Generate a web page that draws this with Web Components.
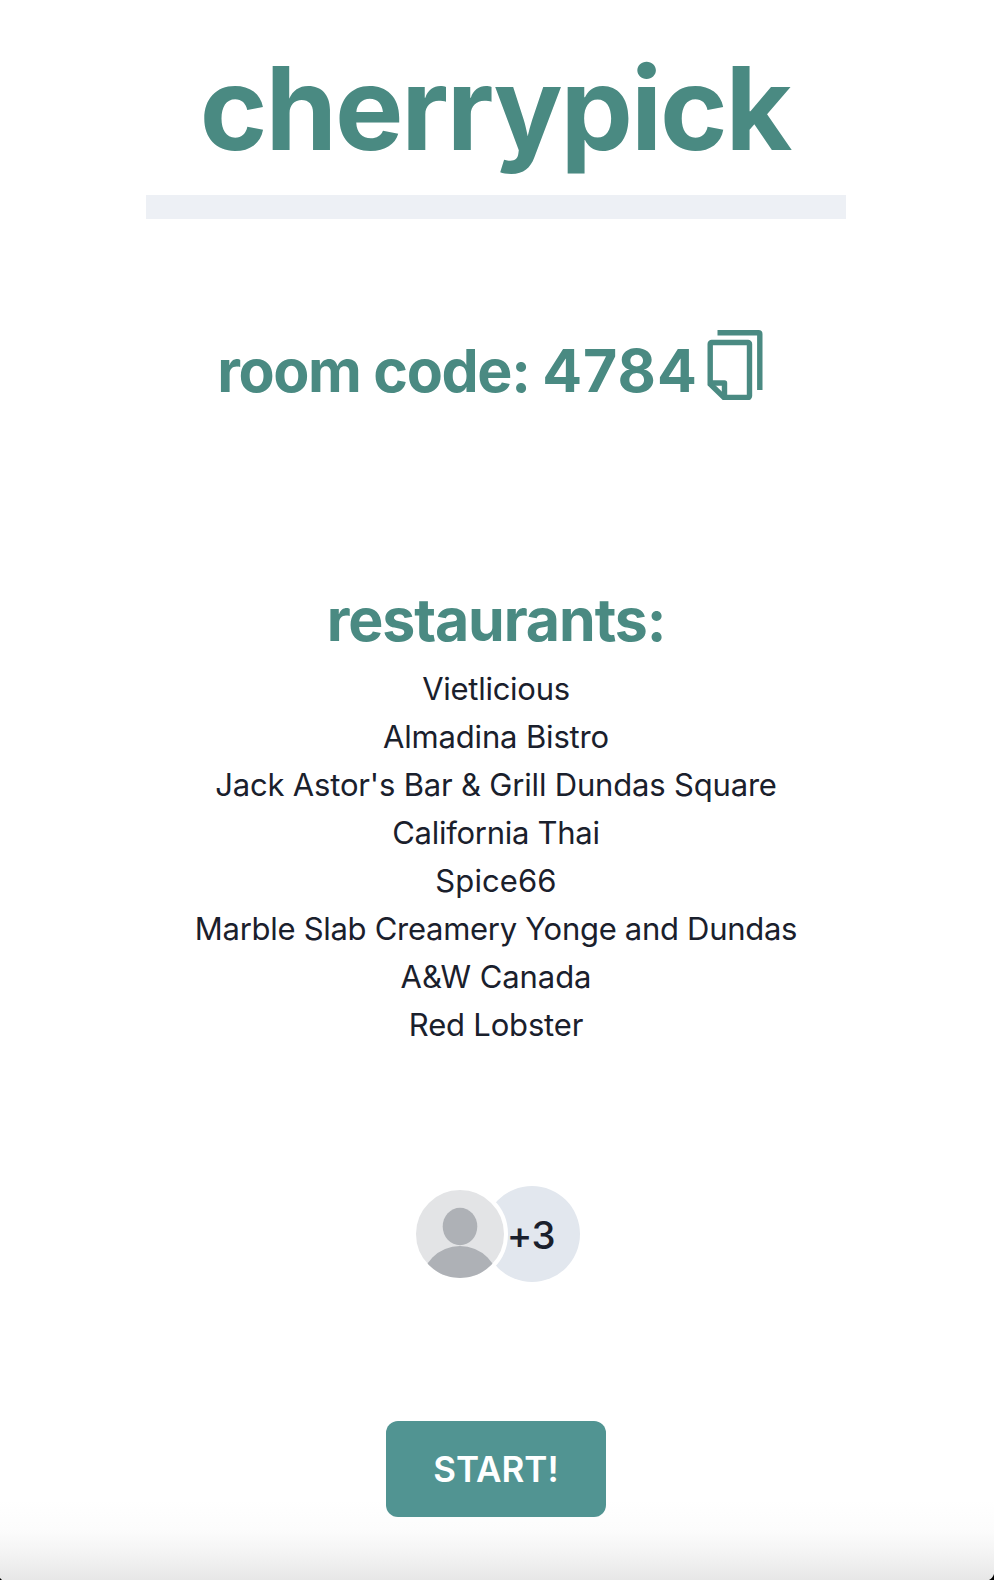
<!DOCTYPE html>
<html lang="en">
<head>
  <meta charset="UTF-8">
  <title>cherrypick</title>
  <style>
    body {
      margin: 0;
      background: #fff;
    }
  </style>
</head>
<body>
  <room-page>
    <room-title slot="title">cherrypick</room-title>
    <room-code slot="code">room code: <span style="letter-spacing: 1px">4784</span></room-code>
    <restaurant-list slot="list">
      <span slot="heading">restaurants:</span>
      <restaurant-item style="letter-spacing: -0.28px">Vietlicious</restaurant-item>
      <restaurant-item style="letter-spacing: -0.16px">Almadina Bistro</restaurant-item>
      <restaurant-item style="letter-spacing: -0.18px">Jack Astor's Bar &amp; Grill Dundas Square</restaurant-item>
      <restaurant-item style="letter-spacing: -0.27px">California Thai</restaurant-item>
      <restaurant-item style="letter-spacing: 0.1px">Spice66</restaurant-item>
      <restaurant-item style="letter-spacing: -0.29px">Marble Slab Creamery Yonge and Dundas</restaurant-item>
      <restaurant-item style="letter-spacing: -0.08px">A&amp;W Canada</restaurant-item>
      <restaurant-item style="letter-spacing: -0.18px">Red Lobster</restaurant-item>
    </restaurant-list>
    <avatar-group slot="people">+3</avatar-group>
    <start-button slot="action">START!</start-button>
  </room-page>

  <script>
    // small helper so each component only has to give its markup
    function define(name, html) {
      customElements.define(name, class extends HTMLElement {
        constructor() {
          super();
          this.attachShadow({ mode: 'open' });
          this.shadowRoot.innerHTML = html;
        }
      });
    }

    define('room-page', `
      <style>
        :host {
          --brand: #4a8a82;
          position: relative;
          display: flex;
          flex-direction: column;
          align-items: center;
          box-sizing: border-box;
          height: 1580px;
          padding: 37px 2px 0 0;
          overflow: hidden;
          color: #1a202c;
          font-family: Inter, "Liberation Sans", sans-serif;
          background: linear-gradient(#fff 1500px, #fcfcfc 1530px, #f5f5f5 1550px, #e7e7e7 1580px);
        }
        .corner {
          position: absolute;
          bottom: 0;
        }
        .left { left: 0; }
        .right { right: 0; }
      </style>
      <slot name="title"></slot>
      <slot name="code"></slot>
      <slot name="list"></slot>
      <slot name="people"></slot>
      <slot name="action"></slot>
      <svg class="corner left" width="2" height="2"><path d="M0 0L2 2H0z"/></svg>
      <svg class="corner right" width="5" height="6"><path d="M5 0V6H0Q3.500 4.500 5 0z"/></svg>
    `);

    define('room-title', `
      <style>
        :host {
          display: flex;
          flex-direction: column;
          align-items: center;
          width: 700px;
          color: var(--brand);
        }
        h1 {
          margin: 0 2px 14px 0;
          font-size: 115px;
          font-weight: 700;
          line-height: 144px;
          letter-spacing: -2.1px;
        }
        .bar {
          width: 100%;
          height: 24px;
          background: #edf0f5;
        }
      </style>
      <h1><slot></slot></h1>
      <div class="bar"></div>
    `);

    define('room-code', `
      <style>
        :host {
          display: flex;
          align-items: flex-start;
          gap: 2px;
          margin-top: 111px;
          padding-right: 5px;
          color: var(--brand);
        }
        h2 {
          margin: 0;
          padding-top: 4px;
          font-size: 59px;
          font-weight: 700;
          line-height: 73px;
          letter-spacing: -1.33px;
          white-space: nowrap;
        }
      </style>
      <h2><slot></slot></h2>
      <copy-icon></copy-icon>
    `);

    define('copy-icon', `
      <style>
        :host {
          display: block;
          width: 70px;
          height: 70px;
        }
        svg { display: block; }
      </style>
      <svg width="70" height="70" viewBox="0 0 70 70" fill="none" stroke="currentColor" stroke-width="5.400">
        <path d="M17.500 2.700H58.500a1.300 1.300 0 0 1 1.300 1.300V60"/>
        <path d="M10.200 54V14a1.500 1.500 0 0 1 1.500-1.500H48a1.500 1.500 0 0 1 1.500 1.500V66a1.500 1.500 0 0 1-1.500 1.500H24z"/>
        <path d="M10 53H24.500V67" stroke-linejoin="round"/>
      </svg>
    `);

    define('restaurant-list', `
      <style>
        :host {
          display: flex;
          flex-direction: column;
          align-items: center;
          margin-top: 176px;
        }
        h2 {
          margin: 0 0 9px;
          color: var(--brand);
          font-size: 59px;
          font-weight: 700;
          line-height: 73px;
          letter-spacing: -1.1px;
        }
      </style>
      <h2><slot name="heading"></slot></h2>
      <slot></slot>
    `);

    define('restaurant-item', `
      <style>
        :host {
          display: block;
          font-size: 31px;
          line-height: 48px;
          white-space: nowrap;
        }
      </style>
      <slot></slot>
    `);

    define('avatar-group', `
      <style>
        :host {
          display: flex;
          margin-top: 137px;
        }
        .avatar {
          z-index: 1;
          width: 88px;
          height: 88px;
          border: 4px solid #fff;
          border-radius: 50%;
          background: #e3e4e6;
          overflow: hidden;
        }
        .excess {
          display: flex;
          align-items: center;
          justify-content: center;
          box-sizing: border-box;
          width: 96px;
          height: 96px;
          margin-left: -24px;
          padding: 1px 2px 0 0;
          border-radius: 50%;
          background: #e2e7ee;
          font-size: 38.4px;
          font-weight: 500;
          letter-spacing: -0.3px;
        }
        svg { display: block; }
      </style>
      <div class="avatar">
        <svg width="88" height="88" fill="#aeb1b6">
          <ellipse cx="44" cy="36.500" rx="17.300" ry="18.700"/>
          <circle cx="44" cy="95" r="39"/>
        </svg>
      </div>
      <div class="excess"><slot></slot></div>
    `);

    define('start-button', `
      <style>
        :host {
          display: block;
          margin-top: 139px;
        }
        button {
          display: block;
          width: 220px;
          height: 96px;
          padding: 0;
          border: none;
          border-radius: 12px;
          background: #519492;
          color: #fff;
          font-family: inherit;
          font-size: 35px;
          font-weight: 560;
        }
      </style>
      <button><slot></slot></button>
    `);
  </script>
</body>
</html>
